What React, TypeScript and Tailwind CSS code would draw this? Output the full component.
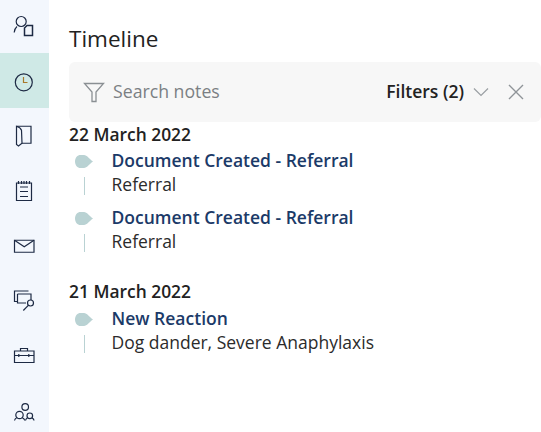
const sideIcons = [
  <g key="a"><circle cx="8.200" cy="6.500" r="5" /><path d="M1.200 17.500c.3-2.500 1.300-4.800 2.800-6" /><path d="M14 10.500h5.500v10h-8v-7.500z" strokeWidth="1.500" /></g>,
  <g key="b"><circle cx="10.800" cy="12.300" r="8.500" /><path d="M10.500 7v5.500h4" stroke="#a9782a" /></g>,
  <g key="c"><path d="M3.500 1.250H18v17H9" /><path d="M3.500 1.250c3 1 4.500 2.500 5 4l.5 13-3.500 2.750-2-1.500z" /></g>,
  <g key="d"><path d="M3.500 4h15v17.500h-15z" /><path d="M7 8h8M7 12.500h8M7 17.500h8M5.500 2v3M8.500 2v3M11 2v3M13.500 2v3M16.500 2v3" /></g>,
  <g key="e"><path d="M1.500 6.250H21v12H1.500z" /><path d="M1.500 6.250l9.750 6.500L21 6.250" /></g>,
  <g key="f"><path d="M15.500 3H1.500v10.500h3" /><path d="M4.500 6H18v6M4.500 6v9H13" /><circle cx="17.500" cy="15" r="3" /><path d="M15.300 17.300l-5 5.200" /></g>,
  <g key="g"><path d="M1.500 8H21v11.500H1.500zM1.500 12.500H21M7.500 8V5.500h7V8M5.800 11v3M15.800 11v3" /></g>,
  <g key="h"><circle cx="12.200" cy="10" r="3.300" /><circle cx="6.500" cy="18" r="3.700" /><circle cx="16.800" cy="18.800" r="2.800" /><path d="M1.500 23.500c.3-1.500 1.500-2.500 2.500-3M9 20.500c1.500.8 2.500 1.500 2.800 3M12.500 23.500c.3-1.500 1-2 2-2.700M19 20.800c1 .7 2 1.500 2 2.700" /></g>,
];

function Bullet() {
  return (
    <svg width="18" height="13" viewBox="0 0 18 12" preserveAspectRatio="none" className="shrink-0 mt-[2px]">
      <path d="M0 6c0-3.500 2.500-6 5.500-6H9c3 0 5 3.500 9 6-4 2.500-6 6-9 6H5.500C2.500 12 0 9.500 0 6z" fill="#b9d2d3" />
    </svg>
  );
}

function Entry({ title, sub, className = "" }: { title: string; sub: string; className?: string }) {
  return (
    <div className={className}>
      <div className="flex items-center h-[24px]">
        <div className="w-[42.500px] pl-[6px] flex items-center"><Bullet /></div>
        <div className="text-[17.500px] font-semibold text-[#1b3a68] leading-[24px]">{title}</div>
      </div>
      <div className="flex items-center h-[24px]">
        <div className="w-[42.500px] pl-[15px] flex items-center"><div className="w-px h-[18px] mt-[4px] bg-[#b9d2d3]" /></div>
        <div className="text-[17.500px] text-[#2b2b2b] leading-[24px]">{sub}</div>
      </div>
    </div>
  );
}

export default function App() {
  return (
    <div className="flex w-[541px] h-[432px] overflow-hidden bg-white font-['Open_Sans',sans-serif]">
      <nav className="w-[49px] shrink-0 bg-[#f3f7fd] flex flex-col">
        {sideIcons.map((ic, i) => (
          <div
            key={i}
            className={
              i === 0
                ? "h-[53px] shrink-0 flex items-center justify-center"
                : i === 1
                ? "h-[55px] shrink-0 flex items-center justify-center pt-[3px] bg-[#cfe9e6]"
                : "h-[54.500px] shrink-0 flex items-center justify-center pt-[3px]"
            }
          >
            <svg width="24" height="24" viewBox="0 0 24 24" fill="none" stroke="#1d2a44" strokeWidth="1.200" className="shrink-0">{ic}</svg>
          </div>
        ))}
      </nav>
      <main className="flex-1 pl-[20px] pt-[24px]">
        <h1 className="text-[22.500px] leading-[30px] text-[#222] font-normal">Timeline</h1>
        <div className="mt-[8px] h-[60px] rounded-[6px] bg-[#f7f7f7] flex items-center pl-[14px] pr-[16px]">
          <svg width="22" height="22" viewBox="0 0 22 22" fill="none" stroke="#8a8f93" strokeWidth="1.300" className="shrink-0">
            <path d="M1.500 2.500h19l-7.500 8.500v9.500h-4V11z" />
          </svg>
          <span className="ml-[8px] mb-[2px] text-[17.700px] text-[#7b7f83]">Search notes</span>
          <span className="ml-auto mb-[2px] text-[17.500px] font-semibold text-[#222]">Filters (2)</span>
          <svg width="16" height="10" viewBox="0 0 16 10" fill="none" stroke="#9a9fa3" strokeWidth="1.200" className="ml-[9px]">
            <path d="M1 1.500l7 7 7-7" />
          </svg>
          <svg width="18" height="18" viewBox="0 0 18 18" fill="none" stroke="#8f9498" strokeWidth="1.400" className="ml-[18px]">
            <path d="M2 2l14 14M16 2L2 16" />
          </svg>
        </div>
        <div className="text-[17.400px] font-semibold text-[#222] leading-[24px]">22 March 2022</div>
        <Entry title="Document Created - Referral" sub="Referral" className="mt-[2px]" />
        <Entry title="Document Created - Referral" sub="Referral" className="mt-[9px]" />
        <div className="text-[17.400px] font-semibold text-[#222] leading-[24px] mt-[26px]">21 March 2022</div>
        <Entry title="New Reaction" sub="Dog dander, Severe Anaphylaxis" className="mt-[3px]" />
      </main>
    </div>
  );
}
